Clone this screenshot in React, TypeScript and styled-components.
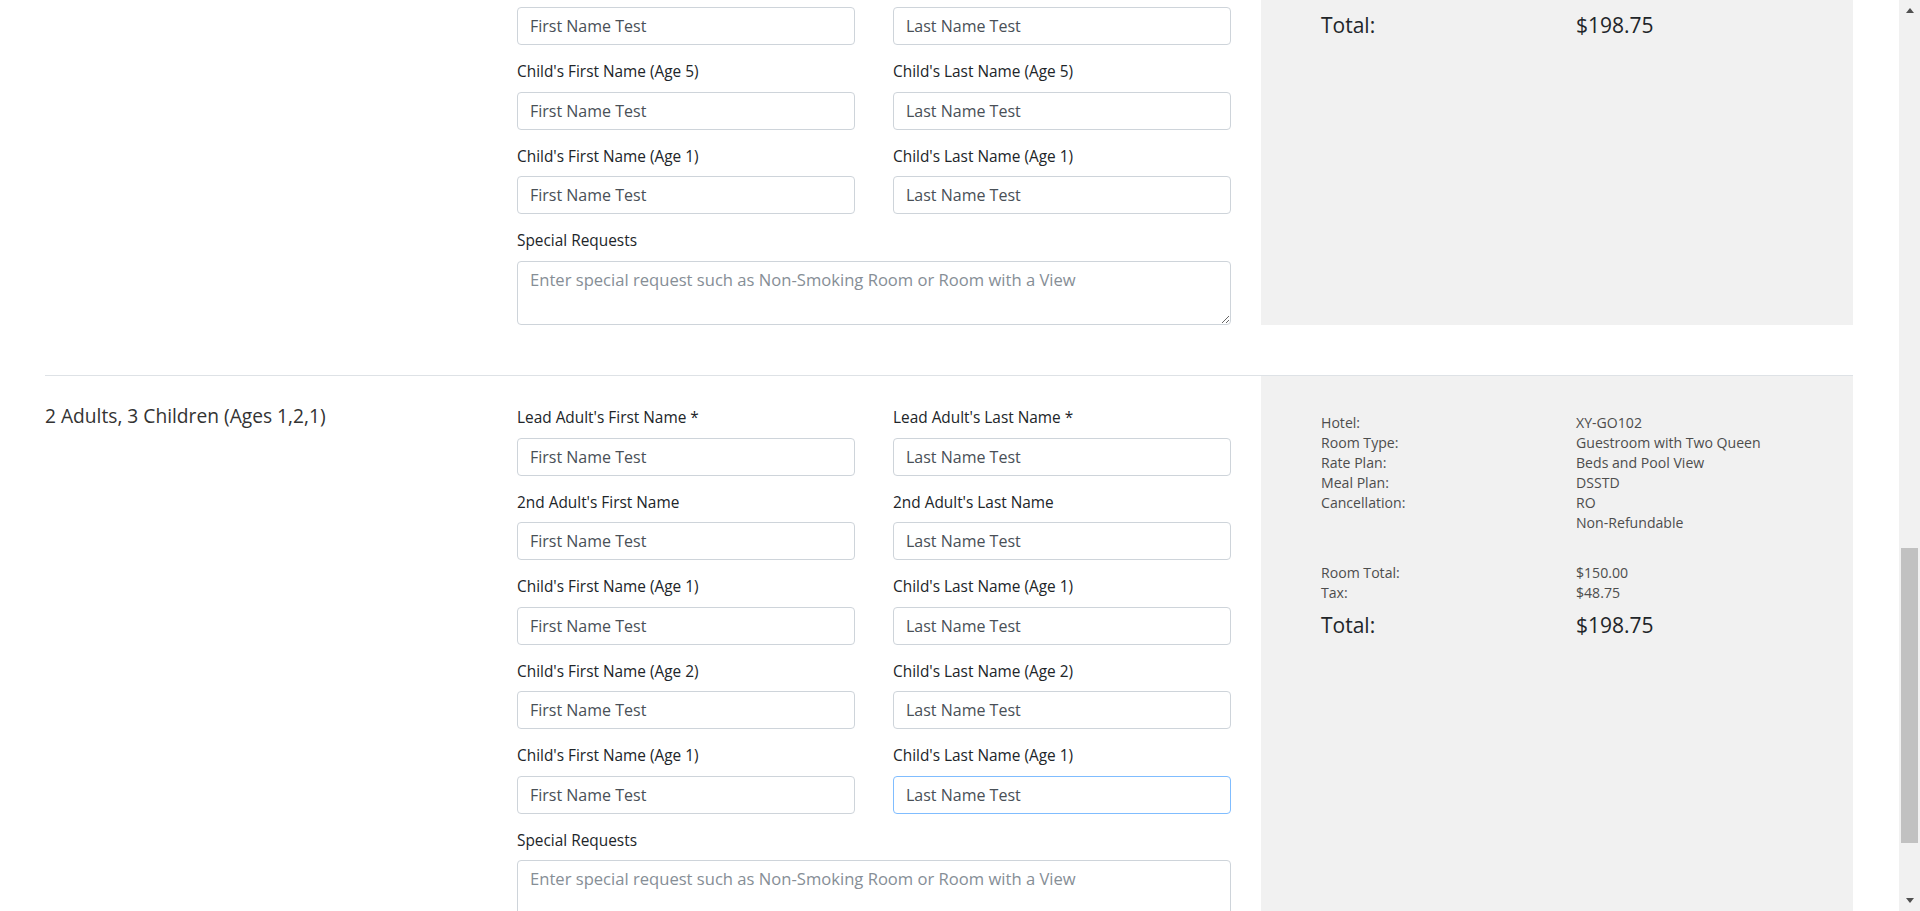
import React from 'react';
import styled, { createGlobalStyle } from 'styled-components';

const GlobalStyle = createGlobalStyle`
  html, body {
    margin: 0;
    padding: 0;
    height: 100%;
    overflow: hidden;
    background: #fff;
  }
  body {
    font-family: 'Segoe UI', 'Open Sans', 'Noto Sans', sans-serif;
    color: #212529;
  }
  * {
    box-sizing: border-box;
  }
`;

const Screen = styled.div`
  display: flex;
  height: 100vh;
  overflow: hidden;
`;

const Viewport = styled.main`
  flex: 1;
  min-width: 0;
  overflow: hidden;
`;

// the page is shown scrolled down, so the first room starts above the fold
const Page = styled.div<{ $scroll: number }>`
  margin-top: ${(p) => -p.$scroll}px;
`;

const Booking = styled.section`
  display: flex;
  width: 1808px;
  margin-left: 45px;
  padding-bottom: 50px;
  border-bottom: 1px solid #dee2e6;
`;

const RoomTitle = styled.h2`
  flex: none;
  width: 472px;
  margin: 0;
  padding-top: 26px;
  font-size: 19.2px;
  line-height: 28px;
  font-weight: 400;
  color: #333;
`;

const GuestForm = styled.form`
  flex: none;
  width: 714px;
  padding-top: 31.5px;
  display: grid;
  grid-template-columns: 1fr 1fr;
  column-gap: 38px;
`;

const Field = styled.div<{ $wide?: boolean }>`
  margin-bottom: ${(p) => (p.$wide ? 0 : 16)}px;
  grid-column: ${(p) => (p.$wide ? '1 / -1' : 'auto')};
`;

const Label = styled.label`
  display: block;
  font-size: 15.4px;
  line-height: 22.5px;
  margin-bottom: 8px;
  color: #212529;
`;

const Input = styled.input<{ $focused?: boolean }>`
  display: block;
  width: 100%;
  height: 38px;
  padding: 6px 12px;
  font-family: inherit;
  font-size: 16px;
  line-height: 24px;
  color: #495057;
  background: #fff;
  border: 1px solid ${(p) => (p.$focused ? '#80bdff' : '#ced4da')};
  border-radius: 4px;
  outline: none;
`;

const TextArea = styled.textarea`
  display: block;
  width: 100%;
  height: 64px;
  padding: 6px 12px;
  font-family: inherit;
  font-size: 16.6px;
  line-height: 24px;
  color: #495057;
  background: #fff;
  border: 1px solid #ced4da;
  border-radius: 4px;
  outline: none;

  &::placeholder {
    color: #868e96;
  }
`;

const Summary = styled.aside`
  flex: none;
  width: 592px;
  margin-left: 30px;
  padding: 37px 60px 0;
  background: #f1f1f1;
  font-size: 14.1px;
  line-height: 20px;
  color: #4d4d4d;
`;

const SummaryGrid = styled.div<{ $gap?: number }>`
  display: grid;
  grid-template-columns: 255px 1fr;
  margin-top: ${(p) => p.$gap || 0}px;
`;

const ValueList = styled.div`
  max-width: 210px;
`;

const TotalRow = styled(SummaryGrid)`
  font-size: 21px;
  line-height: 28px;
  color: #212529;
`;

const Scrollbar = styled.div`
  flex: none;
  width: 21px;
  display: flex;
  flex-direction: column;
  background: #f1f1f1;
`;

const ArrowButton = styled.div<{ $down?: boolean }>`
  height: 21px;
  display: flex;
  align-items: center;
  justify-content: center;

  &::after {
    content: '';
    border-left: 4.5px solid transparent;
    border-right: 4.5px solid transparent;
    ${(p) =>
      p.$down ? 'border-top: 5px solid #505050;' : 'border-bottom: 5px solid #505050;'}
  }
`;

const Track = styled.div`
  flex: 1;
`;

const Thumb = styled.div<{ $top: number; $height: number }>`
  margin: ${(p) => p.$top}px 2px 0;
  height: ${(p) => p.$height}px;
  background: #c1c1c1;
`;

interface Guest {
  first: string;
  last: string;
}

interface Room {
  title: string;
  guests: Guest[];
  focusLast?: boolean;
}

const adultsAndChildren = (ages: number[]): Guest[] => [
  { first: "Lead Adult's First Name *", last: "Lead Adult's Last Name *" },
  { first: "2nd Adult's First Name", last: "2nd Adult's Last Name" },
  ...ages.map((age) => ({
    first: `Child's First Name (Age ${age})`,
    last: `Child's Last Name (Age ${age})`,
  })),
];

const rooms: Room[] = [
  { title: '2 Adults, 3 Children (Ages 3,5,1)', guests: adultsAndChildren([3, 5, 1]) },
  { title: '2 Adults, 3 Children (Ages 1,2,1)', guests: adultsAndChildren([1, 2, 1]), focusLast: true },
];

const RoomBooking = ({ room }: { room: Room }) => (
  <Booking>
    <RoomTitle>{room.title}</RoomTitle>
    <GuestForm onSubmit={(e) => e.preventDefault()}>
      {room.guests.map((g, i) => (
        <React.Fragment key={i}>
          <Field>
            <Label>{g.first}</Label>
            <Input defaultValue="First Name Test" />
          </Field>
          <Field>
            <Label>{g.last}</Label>
            <Input
              defaultValue="Last Name Test"
              $focused={room.focusLast && i === room.guests.length - 1}
            />
          </Field>
        </React.Fragment>
      ))}
      <Field $wide>
        <Label>Special Requests</Label>
        <TextArea placeholder="Enter special request such as Non-Smoking Room or Room with a View" />
      </Field>
    </GuestForm>
    <Summary>
      <SummaryGrid>
        <div>
          <div>Hotel:</div>
          <div>Room Type:</div>
          <div>Rate Plan:</div>
          <div>Meal Plan:</div>
          <div>Cancellation:</div>
        </div>
        <ValueList>
          <div>XY-GO102</div>
          <div>Guestroom with Two Queen Beds and Pool View</div>
          <div>DSSTD</div>
          <div>RO</div>
          <div>Non-Refundable</div>
        </ValueList>
      </SummaryGrid>
      <SummaryGrid $gap={30}>
        <div>Room Total:</div>
        <div>$150.00</div>
        <div>Tax:</div>
        <div>$48.75</div>
      </SummaryGrid>
      <TotalRow $gap={8}>
        <div>Total:</div>
        <div>$198.75</div>
      </TotalRow>
    </Summary>
  </Booking>
);

const App = () => (
  <>
    <GlobalStyle />
    <Screen>
      <Viewport>
        <Page $scroll={224}>
          {rooms.map((room, i) => (
            <RoomBooking key={i} room={room} />
          ))}
        </Page>
      </Viewport>
      <Scrollbar>
        <ArrowButton />
        <Track>
          <Thumb $top={527} $height={295} />
        </Track>
        <ArrowButton $down />
      </Scrollbar>
    </Screen>
  </>
);

export default App;
